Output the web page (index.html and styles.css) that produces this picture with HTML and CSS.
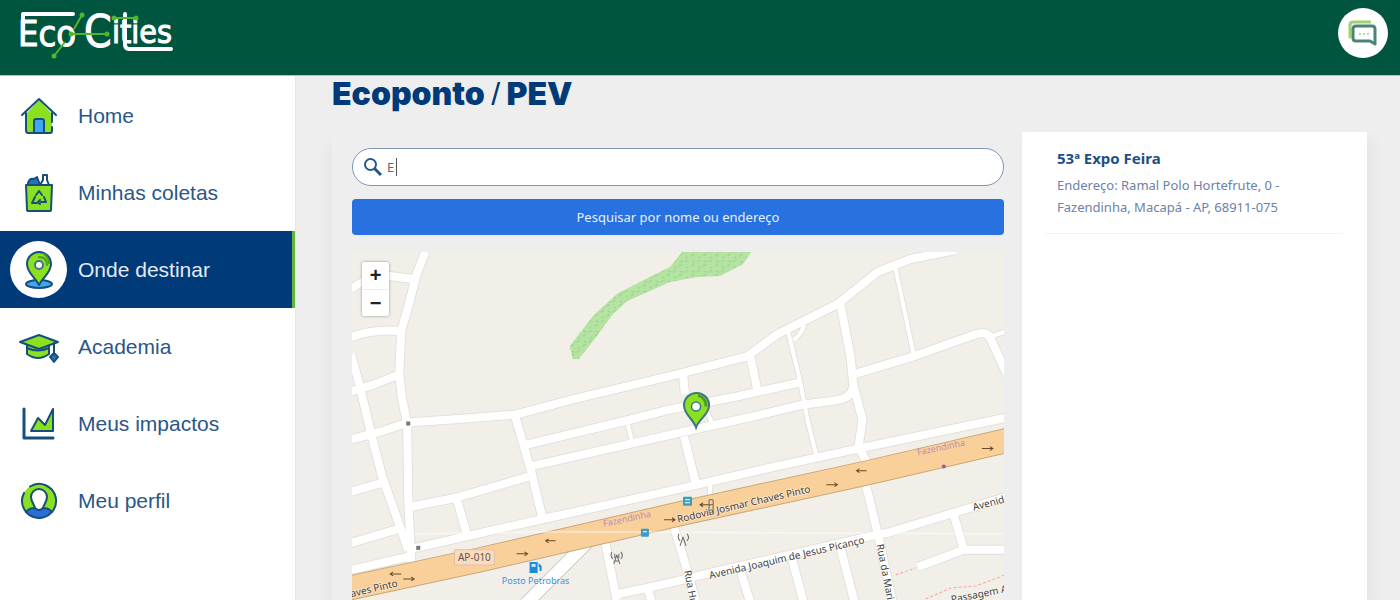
FILE: index.html
```html
<!DOCTYPE html>
<html lang="pt-BR">
<head>
    <meta charset="UTF-8">
    <meta name="viewport" content="width=device-width, initial-scale=1.0">
    <title>EcoCities - Ecoponto / PEV</title>
    <link rel="stylesheet" href="styles.css">
</head>
<body>
    <header class="topbar">
        <a href="#" class="logo">
            <svg width="170" height="60" viewBox="16 4 170 60">
                <g class="logo-text">
                    <text x="18" y="46" font-size="36">Eco</text>
                    <text x="84" y="47" font-size="44">C</text>
                    <text x="112" y="43" font-size="32">ities</text>
                </g>
                <path class="logo-line" d="M23 30V14H73M125 14V44Q125 49 129 49H171"/>
                <path class="logo-green" d="M82 15L74 29M65 42L54 56M71 34H107M114 18H136"/>
                <g fill="#4db82e">
                    <circle cx="82" cy="15" r="2.5"/><circle cx="71" cy="34" r="2.5"/>
                    <circle cx="54" cy="56" r="2.5"/><circle cx="107" cy="34" r="2.5"/>
                    <circle cx="114" cy="18" r="2.5"/><circle cx="136" cy="18" r="2.5"/>
                </g>
            </svg>
        </a>
        <button class="chat-button" aria-label="Chat">
            <svg width="32" height="28" viewBox="0 0 32 28" fill="none" stroke-width="3" stroke-linejoin="round">
                <path d="M4 18H3V6Q3 3 6 3H24" stroke="#a5cf73"/>
                <path d="M9 7H25Q28 7 28 10V25L23 22H9Q6 22 6 19V10Q6 7 9 7Z" fill="#fff" stroke="#4a8476"/>
                <path d="M12 15H22" stroke="#b9dc93" stroke-width="2" stroke-dasharray="2 2"/>
            </svg>
        </button>
    </header>

    <div class="layout">
        <nav class="sidebar">
            <a href="#" class="nav-item">
                <span class="nav-icon">
                    <svg width="38" height="38" viewBox="0 0 38 38">
                        <path class="green" stroke="none" d="M6 17V34Q6 36 8 36H30Q32 36 32 34V17L19 3Z"/>
                        <path class="line" d="M2 18L19 2L36 18M6 16V33Q6 36 8 36H30Q32 36 32 34V30M32 16V25"/>
                        <path class="sky" d="M14 36V24Q14 22 16 22H22Q24 22 24 24V36Z"/>
                    </svg>
                </span>
                <span>Home</span>
            </a>
            <a href="#" class="nav-item">
                <span class="nav-icon">
                    <svg width="38" height="38" viewBox="0 0 38 38">
                        <path class="blue" d="M8 11Q8 4 14 5L17 3L20 11Z"/>
                        <path class="line" fill="#fff" d="M20 11L23 6V1H27V6L29 11"/>
                        <path class="green" d="M6 11H32L31 36Q31 37 29 37H9Q7 37 7 36Z"/>
                        <path class="line" d="M16 21L19 17L22 21M24 23L26 28H21M17 29H12L15 23M20 26L18 28L20 30"/>
                    </svg>
                </span>
                <span>Minhas coletas</span>
            </a>
            <a href="#" class="nav-item active">
                <span class="nav-icon">
                    <svg width="38" height="38" viewBox="0 0 38 38">
                        <ellipse class="sky" cx="19" cy="33" rx="13" ry="4"/>
                        <path class="green" d="M19 34C15 26 7 22 7 13A12 12 0 0 1 31 13C31 22 23 26 19 34Z"/>
                        <path class="line thin" d="M19 6Q27 6 27 14M24 3Q29 7 29 12"/>
                        <circle cx="19" cy="14" r="4" fill="#fff" stroke="#3c7880" stroke-width="2"/>
                    </svg>
                </span>
                <span>Onde destinar</span>
            </a>
            <a href="#" class="nav-item">
                <span class="nav-icon">
                    <svg width="40" height="38" viewBox="0 0 40 38">
                        <path class="green" d="M8 14V26Q19 34 30 26V14Z"/>
                        <path class="green" d="M1 14L20 7L39 14L20 21Z"/>
                        <path class="line" d="M8 20Q19 25 30 20M35 15V27"/>
                        <path class="blue" d="M35 25L39 29L35 34L31 29Z"/>
                    </svg>
                </span>
                <span>Academia</span>
            </a>
            <a href="#" class="nav-item">
                <span class="nav-icon">
                    <svg width="38" height="38" viewBox="0 0 38 38">
                        <path class="green" d="M11 26L18 13L25 20L33 4V26Z"/>
                        <path class="line bold" d="M4 4V33H33"/>
                    </svg>
                </span>
                <span>Meus impactos</span>
            </a>
            <a href="#" class="nav-item">
                <span class="nav-icon">
                    <svg width="38" height="38" viewBox="0 0 38 38">
                        <circle cx="19" cy="19" r="17" fill="#8be01f"/>
                        <path d="M6 30Q9 25 15 26H23Q29 25 32 30Q19 43 6 30Z" fill="#2a6fd6"/>
                        <path class="line" fill="#fff" d="M15 26C15 24 11 20 11 15A8 8 0 0 1 27 15C27 20 23 24 23 26Q19 30 15 26Z"/>
                        <path class="line" d="M6 30Q9 26 15 26M23 26Q29 26 32 30"/>
                        <path class="line" d="M10 4.500A17 17 0 1 1 4 11"/>
                    </svg>
                </span>
                <span>Meu perfil</span>
            </a>
        </nav>

        <main class="content">
            <h1 class="page-title">Ecoponto <span class="slash">/</span> PEV</h1>

            <div class="columns">
                <section class="map-panel">
                    <label class="search-box">
                        <svg width="20" height="20" viewBox="0 0 20 20" fill="none" stroke="#23588c">
                            <circle cx="7.500" cy="7.500" r="5.500" stroke-width="2"/>
                            <path d="M11.500 11.500L18 18" stroke-width="3"/>
                        </svg>
                        <input type="text" class="search-input" value="E" aria-label="Pesquisar">
                        <span class="caret"></span>
                    </label>
                    <button class="search-button">Pesquisar por nome ou endereço</button>

                    <div class="map">
                        <svg class="map-canvas" viewBox="352 253 652 347" preserveAspectRatio="xMidYMin slice">
                            <defs>
                                <pattern id="wood" width="12" height="10" patternUnits="userSpaceOnUse">
                                    <rect width="12" height="10" fill="#b5e3a0"/>
                                    <path d="M1 3L4 1M7 7L10 5M2 8L4 9M8 2L11 3" stroke="#93cfa0" fill="none"/>
                                </pattern>
                                <g id="roads">
                                    <path d="M426 253L417 276L411 300L402 332L400 375L403 400L408 424L409 500L412 562"/>
                                    <path d="M352 290Q370 276 390 277L415 280M352 338Q375 329 402 332M352 392L375 385L400 375"/>
                                    <path d="M352 355L361 388L371 430L383 477L403 533L409 550"/>
                                    <path d="M352 440L385 431L409 423L466 419L517 415L573 400L673 376L747 357L777 335L837 305L877 273L910 260L955 251"/>
                                    <path d="M515 415L532 473L543 519M527 445L627 421L670 410L737 397L800 383"/>
                                    <path d="M530 467L680 433L753 417L803 405L835 401Q851 399 853 387"/>
                                    <path d="M412 507L457 498L529 477M457 498L467 533M352 492L384 483M352 543L403 528"/>
                                    <path d="M352 570L413 556M412 549L540 520L680 489L770 468L853 450L1006 418"/>
                                    <path d="M683 375L685 395M684 437L696 485M750 357L757 390"/>
                                    <path d="M840 305L850 357L853 387L862 420L858 447L866 462"/>
                                    <path d="M853 375L913 357L972 336Q986 330 990 340L1006 375"/>
                                    <path d="M605 541L617 600M614 595L670 583L710 573L867 537L887 533L970 508L1006 497"/>
                                    <path d="M674 527L687 570L696 602M865 484L877 533L892 602"/>
                                    <path d="M740 570L750 602M792 560L803 602M840 548L854 602M953 515L963 550H1006M963 550L917 567M648 590L652 602"/>
                                </g>
                                <g id="lanes">
                                    <path d="M788 333L800 383L807 420L816 456M804 326Q800 336 793 341M895 270L913 355M990 337L1006 332M628 425L632 441M706 410L713 426M710 484V502"/>
                                </g>
                            </defs>

                            <rect x="352" y="253" width="652" height="347" fill="#f2efe9"/>
                            <path fill="url(#wood)" d="M573 360L570 347L593 317L617 295L640 283L670 268L682 253H751L743 265L720 277L697 278L670 283L650 292L627 302L613 315L597 337L579 360Z"/>

                            <use href="#roads" class="road-case"/>
                            <use href="#lanes" class="lane-case"/>
                            <path class="link-case" d="M594 536L580 550L526 604"/>
                            <use href="#roads" class="road"/>
                            <use href="#lanes" class="lane"/>
                            <path class="link" d="M594 536L580 550L526 604"/>

                            <path class="trunk-case" d="M346 589L480 560L680 514L863 474L1010 440"/>
                            <path class="trunk" d="M346 589L480 560L680 514L863 474L1010 440"/>
                            <path d="M415 534L560 532L1004 534" stroke="#fff" stroke-opacity=".45" stroke-width="2" fill="none"/>

                            <g class="arrows">
                                <path d="M402 574H391M394 572L391 574L394 576M404 579H415M412 577L415 579L412 581"/>
                                <path d="M517 554H528M525 552L528 554L525 556M556 541H546M549 539L546 541L549 543"/>
                                <path d="M664 520H675M672 518L675 520L672 522M710 505H700M703 503L700 505L703 507"/>
                                <path d="M826 485H837M834 483L837 485L834 487M866 471H856M859 469L856 471L859 473M981 449H992M989 447L992 449L989 451"/>
                            </g>

                            <g class="street">
                                <text transform="translate(340 600) rotate(-13)">Chaves Pinto</text>
                                <text transform="translate(678 523) rotate(-13)">Rodovia Josmar Chaves Pinto</text>
                                <text transform="translate(710 579) rotate(-13)">Avenida Joaquim de Jesus Picanço</text>
                                <text transform="translate(973 511) rotate(-15)">Avenida</text>
                                <text transform="translate(876 545) rotate(79)">Rua da Maria</text>
                                <text transform="translate(684 571) rotate(79)">Rua Hugo</text>
                                <text transform="translate(951 603) rotate(-11)">Passagem A</text>
                            </g>
                            <g class="stop-name">
                                <text transform="translate(604 527) rotate(-12)">Fazendinha</text>
                                <text transform="translate(917 456) rotate(-12)">Fazendinha</text>
                            </g>
                            <path class="footpath" d="M895 575L915 568M925 599L950 588L975 586L1004 575"/>
                            <rect x="455" y="550" width="40" height="15" rx="2" fill="#f7dcc4" stroke="#e6bf9c"/>
                            <text class="road-ref" x="475" y="561" text-anchor="middle">AP-010</text>

                            <path fill="#1a8bd8" d="M530 562H538V573H530ZM539 563L542 566V571H540V567H539Z"/>
                            <path fill="#cfe8f8" d="M532 564H536V567H532Z"/>
                            <text class="fuel" x="536" y="584" text-anchor="middle">Posto Petrobras</text>
                            <g fill="#3a9cc4">
                                <rect x="683" y="497" width="9" height="9" rx="1"/>
                                <rect x="641" y="529" width="8" height="8" rx="1"/>
                            </g>
                            <path d="M685 500H690M685 503H690M643 532H647" stroke="#fff" fill="none"/>
                            <g fill="none" stroke="#666">
                                <path d="M612 552Q610 556 613 559M621 552Q624 556 621 559M615 554V558M619 554V558M617 555L614 564M617 555L620 564M615 561H619"/>
                                <path d="M679 534Q677 538 680 541M687 534Q690 538 687 541M683 537L680 546M683 537L686 546M709 500V513M713 500V513M709 500H713M709 505H713"/>
                            </g>
                            <rect x="407" y="422" width="4" height="4" fill="#777"/>
                            <rect x="417" y="546" width="4" height="4" fill="#777"/>
                            <circle cx="943" cy="467" r="2" fill="#9a5aa0"/>

                            <path d="M696 428C693 419 684 415 684 406A12.500 12.500 0 0 1 709 406C709 415 699 419 696 428Z" fill="#8be01f" stroke="#3c7880" stroke-width="2"/>
                            <path d="M698 396Q706 398 706 407" stroke="#4f9a2c" stroke-width="3" fill="none"/>
                            <circle cx="696" cy="407" r="4.500" fill="#fff" stroke="#3c7880" stroke-width="1.500"/>
                        </svg>
                        <div class="zoom-control">
                            <button aria-label="Mais zoom">+</button>
                            <button aria-label="Menos zoom">−</button>
                        </div>
                    </div>
                </section>

                <section class="results">
                    <article class="result">
                        <h2 class="result-name">53ª Expo Feira</h2>
                        <p class="result-address">Endereço: Ramal Polo Hortefrute, 0 - Fazendinha, Macapá - AP, 68911-075</p>
                    </article>
                </section>
            </div>
        </main>
    </div>
</body>
</html>
```
FILE: styles.css
```css
* {
    box-sizing: border-box;
}

body {
    margin: 0;
    height: 100vh;
    display: flex;
    flex-direction: column;
    overflow: hidden;
    background: #eeeeee;
    font-family: "Noto Sans", "Open Sans", sans-serif;
    color: #003a78;
}

button,
input {
    font-family: inherit;
}

.topbar {
    display: flex;
    justify-content: space-between;
    align-items: flex-start;
    padding: 4px 12px 11px 16px;
    background: #00553f;
    border-bottom: 1px solid #a9c8bf;
}

.logo svg {
    display: block;
}

.logo-text {
    font-family: "DejaVu Sans Condensed", "DejaVu Sans", sans-serif;
    fill: #fff;
    stroke: #fff;
    stroke-width: 1;
}

.logo-line {
    fill: none;
    stroke: #fff;
    stroke-width: 4;
    stroke-linecap: round;
    stroke-linejoin: round;
}

.logo-green {
    fill: none;
    stroke: #4db82e;
    stroke-width: 2;
}

.chat-button {
    width: 50px;
    height: 50px;
    margin-top: 4px;
    padding: 0;
    border: none;
    border-radius: 50%;
    background: #fff;
    display: flex;
    align-items: center;
    justify-content: center;
    cursor: pointer;
}

.layout {
    flex: 1;
    min-height: 0;
    display: flex;
}

/* sidebar */
.sidebar {
    width: 296px;
    flex-shrink: 0;
    padding-top: 1px;
    background: #fff;
    border-right: 1px solid #e6e6e6;
}

.nav-item {
    display: flex;
    align-items: center;
    gap: 11px;
    height: 77px;
    padding-left: 10px;
    color: #2a5788;
    font-family: "Liberation Sans", Arial, sans-serif;
    font-size: 21px;
    text-decoration: none;
}

.nav-item.active {
    background: #003a78;
    border-right: 3px solid #5fb83c;
    color: #e3ebf4;
}

.nav-icon {
    width: 57px;
    height: 57px;
    border-radius: 50%;
    display: flex;
    align-items: center;
    justify-content: center;
}

.active .nav-icon {
    background: #fff;
}

.green,
.blue,
.sky,
.line {
    stroke: #174f7c;
    stroke-width: 2;
    stroke-linejoin: round;
    stroke-linecap: round;
}

.green {
    fill: #8be01f;
}

.green[stroke="none"] {
    stroke: none;
}

.blue {
    fill: #2375b5;
}

.sky {
    fill: #42a5f5;
}

.line:not([fill]) {
    fill: none;
}

.line.thin {
    stroke: #4f9a2c;
}

.line.bold {
    stroke-width: 3;
}

/* content */
.content {
    flex: 1;
    min-width: 0;
    display: flex;
    flex-direction: column;
    padding: 0 33px 0 36px;
}

.page-title {
    margin: 0 0 20px;
    font-family: Inter, "Liberation Sans", sans-serif;
    font-size: 32px;
    font-weight: 900;
    line-height: 36px;
}

.slash {
    font-family: "Liberation Sans", Arial, sans-serif;
    font-weight: 400;
}

.columns {
    flex: 1;
    min-height: 0;
    display: grid;
    grid-template-columns: 2fr 1fr;
}

.map-panel {
    display: flex;
    flex-direction: column;
    min-height: 0;
    padding: 16px 18px 0 20px;
    box-shadow: -6px 12px 12px rgba(0, 0, 0, 0.03);
}

.search-box {
    position: relative;
    display: flex;
    align-items: center;
    height: 38px;
    margin-bottom: 13px;
    padding: 0 18px 0 10px;
    background: #fff;
    border: 1px solid #7f95bb;
    border-radius: 19px;
}

.search-input {
    flex: 1;
    min-width: 0;
    margin-left: 4px;
    padding: 0;
    border: none;
    outline: none;
    background: transparent;
    color: #666;
    font-size: 13px;
}

.caret {
    position: absolute;
    left: 43px;
    top: 9px;
    width: 1px;
    height: 18px;
    background: #555;
}

.search-button {
    height: 36px;
    margin-bottom: 17px;
    border: none;
    border-radius: 4px;
    background: #2871e0;
    color: #e6effc;
    font-size: 13px;
    cursor: pointer;
}

.map {
    position: relative;
    flex: 1;
    min-height: 0;
    display: flex;
    overflow: hidden;
}

.map-canvas {
    flex: 1;
    min-width: 0;
}

.zoom-control {
    position: absolute;
    top: 10px;
    left: 10px;
    background: #fff;
    border-radius: 2px;
    box-shadow: 0 0 3px rgba(0, 0, 0, 0.4);
}

.zoom-control button {
    display: block;
    width: 27px;
    height: 27px;
    padding: 0;
    border: none;
    background: none;
    color: #222;
    font: bold 20px "Liberation Sans", Arial, sans-serif;
    cursor: pointer;
}

.zoom-control button + button {
    border-top: 1px solid #eee;
}

/* map drawing */
.road-case,
.road,
.lane-case,
.lane,
.link-case,
.link,
.trunk-case,
.trunk {
    fill: none;
    stroke: #fff;
    stroke-linejoin: round;
}

.road-case {
    stroke: #e4e1db;
    stroke-width: 10;
}

.road {
    stroke-width: 8;
}

.lane-case {
    stroke: #e4e1db;
    stroke-width: 6;
}

.lane {
    stroke-width: 4;
}

.link-case {
    stroke: #cfccc6;
    stroke-width: 14;
}

.link {
    stroke-width: 12;
}

.trunk-case {
    stroke: #c8a878;
    stroke-width: 25;
}

.trunk {
    stroke: #fad09a;
    stroke-width: 23;
}

.arrows {
    fill: none;
    stroke: #6b4a22;
    stroke-width: 1;
}

.street {
    font-size: 10px;
    fill: #444;
    stroke: #fff;
    stroke-opacity: 0.4;
    stroke-width: 2;
    paint-order: stroke;
}

.stop-name {
    font-size: 9px;
    fill: #b98fb4;
}

.road-ref {
    font-size: 10px;
    fill: #6b5540;
}

.fuel {
    font-size: 9px;
    fill: #3d8fe0;
}

.footpath {
    fill: none;
    stroke: #f0a8a0;
    stroke-dasharray: 3 2;
}

/* results */
.results {
    padding: 14px 24px;
    background: #fff;
    box-shadow: 6px 6px 12px rgba(0, 0, 0, 0.04);
}

.result {
    padding: 0 11px 15px;
    border-bottom: 1px solid #f3f3f3;
}

.result-name {
    margin: 0 0 4px;
    font-size: 15px;
    line-height: 24px;
    color: #1d4f86;
}

.result-address {
    margin: 0;
    font-size: 13px;
    line-height: 22px;
    color: #6b82a6;
}
```
